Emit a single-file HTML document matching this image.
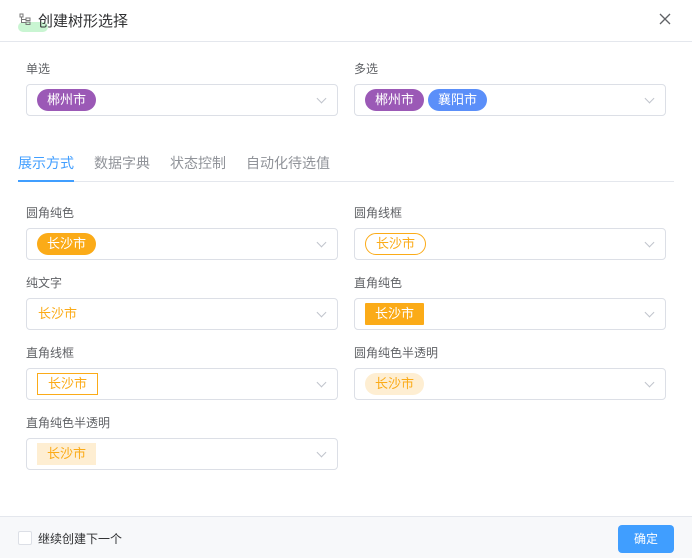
<!DOCTYPE html>
<html><head><meta charset="utf-8"><style>
*{box-sizing:border-box;margin:0;padding:0}
body{width:692px;height:558px;background:#fff;font-family:"Liberation Sans","Noto Sans CJK SC",sans-serif;position:relative;overflow:hidden;color:#606266}
.a{position:absolute}
.lbl{position:absolute;font-size:12px;color:#606266;line-height:14px}
.box{position:absolute;width:312px;height:32px;border:1px solid #dcdfe6;border-radius:4px}
.box .arr{position:absolute;right:12px;top:10px;width:7px;height:7px;border-right:1px solid #c0c4cc;border-bottom:1px solid #c0c4cc;transform:rotate(45deg)}
.tag{position:absolute;top:4px;height:22px;line-height:22px;font-size:13px;padding:0 10px;white-space:nowrap}
.tab{position:absolute;top:153px;font-size:14px;color:#909399}
</style></head><body>
<div class="a" style="left:18px;top:22px;width:30px;height:10px;background:#c9f5d2;border-radius:5px"></div>
<svg class="a" style="left:19px;top:13px" width="13" height="12" viewBox="0 0 13 12" fill="none" stroke="#777" stroke-width="1"><rect x="1" y="1" width="3" height="3"/><rect x="7" y="5" width="4" height="2.5"/><rect x="7" y="9" width="4" height="2.5"/><path d="M2.5 4v5.5H7M2.5 6.5H7"/></svg>
<div class="a" style="left:38px;top:10px;font-size:15px;color:#303133">创建树形选择</div>
<svg class="a" style="left:659px;top:13px" width="12" height="12" viewBox="0 0 12 12" stroke="#606266" stroke-width="1.3"><path d="M1 1L11 11M11 1L1 11"/></svg>
<div class="a" style="left:0;top:41px;width:692px;height:1px;background:#e4e7ed"></div>

<div class="lbl" style="left:26px;top:62px">单选</div>
<div class="box" style="left:26px;top:84px"><div class="tag" style="left:10px;background:#9b59b6;color:#fff;border-radius:11px">郴州市</div><div class="arr"></div></div>
<div class="lbl" style="left:354px;top:62px">多选</div>
<div class="box" style="left:354px;top:84px"><div class="tag" style="left:10px;background:#9b59b6;color:#fff;border-radius:11px">郴州市</div><div class="tag" style="left:73px;background:#5b8ff9;color:#fff;border-radius:11px">襄阳市</div><div class="arr"></div></div>

<div class="tab" style="left:18px;color:#409eff">展示方式</div>
<div class="tab" style="left:94px">数据字典</div>
<div class="tab" style="left:170px">状态控制</div>
<div class="tab" style="left:246px">自动化待选值</div>
<div class="a" style="left:18px;top:181px;width:656px;height:1px;background:#e4e7ed"></div>
<div class="a" style="left:18px;top:180px;width:56px;height:2px;background:#409eff"></div>

<div class="lbl" style="left:26px;top:206px">圆角纯色</div>
<div class="box" style="left:26px;top:228px"><div class="tag" style="left:10px;background:#fbab18;color:#fff;border-radius:11px">长沙市</div><div class="arr"></div></div>
<div class="lbl" style="left:354px;top:206px">圆角线框</div>
<div class="box" style="left:354px;top:228px"><div class="tag" style="left:10px;border:1px solid #fbab18;color:#fbab18;border-radius:11px;line-height:20px">长沙市</div><div class="arr"></div></div>

<div class="lbl" style="left:26px;top:276px">纯文字</div>
<div class="box" style="left:26px;top:298px"><div class="tag" style="left:1px;color:#fbab18">长沙市</div><div class="arr"></div></div>
<div class="lbl" style="left:354px;top:276px">直角纯色</div>
<div class="box" style="left:354px;top:298px"><div class="tag" style="left:10px;background:#fbab18;color:#fff;border-radius:1px">长沙市</div><div class="arr"></div></div>

<div class="lbl" style="left:26px;top:346px">直角线框</div>
<div class="box" style="left:26px;top:368px"><div class="tag" style="left:10px;border:1px solid #fbab18;color:#fbab18;line-height:20px">长沙市</div><div class="arr"></div></div>
<div class="lbl" style="left:354px;top:346px">圆角纯色半透明</div>
<div class="box" style="left:354px;top:368px"><div class="tag" style="left:10px;background:#feeed2;color:#fbab18;border-radius:11px">长沙市</div><div class="arr"></div></div>

<div class="lbl" style="left:26px;top:416px">直角纯色半透明</div>
<div class="box" style="left:26px;top:438px"><div class="tag" style="left:10px;background:#feeed2;color:#fbab18">长沙市</div><div class="arr"></div></div>

<div class="a" style="left:0;top:516px;width:692px;height:42px;background:#f7f8fa;border-top:1px solid #e4e7ed"></div>
<div class="a" style="left:18px;top:531px;width:14px;height:14px;border:1px solid #dcdfe6;background:#fff;border-radius:2px"></div>
<div class="a" style="left:38px;top:530px;font-size:12px;color:#303133">继续创建下一个</div>
<div class="a" style="left:618px;top:525px;width:56px;height:28px;background:#409eff;border-radius:4px;color:#fff;font-size:12px;line-height:28px;text-align:center">确定</div>
</body></html>
